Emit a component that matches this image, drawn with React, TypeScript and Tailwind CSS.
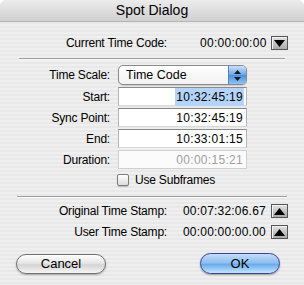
import React, { useState } from "react";

const font = "font-['Liberation_Sans',Arial,sans-serif]";

const StepButton: React.FC<{ up?: boolean }> = ({ up }) => (
    <div className="w-[17px] h-[14px] border border-[#555] bg-[linear-gradient(to_bottom,#e2e2e2,#a9a9a9)] flex items-center justify-center shadow-[inset_1px_1px_0_#f4f4f4]">
        <svg width="11" height="7" viewBox="0 0 11 7">
            {up ? <polygon points="0,7 11,7 5.5,0" fill="#000" /> : <polygon points="0,0 11,0 5.5,7" fill="#000" />}
        </svg>
    </div>
);

const Separator: React.FC<{ className: string }> = ({ className }) => (
    <div className={`h-[2px] border-t border-[#9d9d9d] bg-white/70 ${className}`} />
);

const Field: React.FC<{ value: string; selected?: boolean; disabled?: boolean; className?: string }> = ({ value, selected, disabled, className }) => (
    <div
        className={`w-[129px] h-[19px] flex items-center justify-end pr-[2px] text-[12px] tracking-[0.3px] border-t border-x border-b ${
            disabled ? "bg-[#fbfbfb] border-[#d0d0d0] text-[#a0a0a0]" : "bg-white border-t-[#8a8a8a] border-x-[#b4b4b4] border-b-[#d8d8d8] text-black"
        } ${className ?? ""}`}
    >
        <span className={selected ? "bg-[#b4d4fb] px-[1px]" : "px-[1px]"}>{value}</span>
    </div>
);

const FormRow: React.FC<{ label: string; children: React.ReactNode; className?: string }> = ({ label, children, className }) => (
    <div className={`flex items-center ${className ?? ""}`}>
        <div className="w-[110px] text-right text-[12px] tracking-[-0.2px]">{label}</div>
        <div className="ml-[8px]">{children}</div>
    </div>
);

const StampRow: React.FC<{ label: string; value: string; className?: string }> = ({ label, value, className }) => (
    <div className={`flex items-center h-[16px] ${className ?? ""}`}>
        <div className="w-[167px] text-right text-[12px] tracking-[-0.2px]">{label}</div>
        <div className="ml-[16px] w-[88px] text-[12px] tracking-[0.2px]">{value}</div>
        <StepButton up />
    </div>
);

const App: React.FC = () => {
    const [subframes, setSubframes] = useState(false);

    return (
        <div className={`w-[304px] h-[285px] bg-white ${font} text-black overflow-hidden`}>
            <div className="w-[304px] h-[285px] rounded-t-[6px] overflow-hidden bg-[repeating-linear-gradient(to_bottom,#efefef_0px,#efefef_2px,#e8e8e8_2px,#e8e8e8_4px)] flex flex-col">
                {/* title bar */}
                <div className="h-[22px] shrink-0 bg-[linear-gradient(to_bottom,#ececec,#d0d0d0)] border-b border-[#b5b5b5] flex items-center justify-center text-[14px]">
                    Spot Dialog
                </div>

                <div className="flex items-center h-[20px] mt-[11px]">
                    <div className="w-[167px] text-right text-[12px] tracking-[-0.2px]">Current Time Code:</div>
                    <div className="ml-[33px] w-[71px] text-[12px] tracking-[0.3px]">00:00:00:00</div>
                    <StepButton />
                </div>

                <Separator className="mx-[19px] mt-[5px]" />

                <FormRow label="Time Scale:" className="mt-[5px]">
                    <div className="w-[129px] h-[20px] rounded-[5px] border border-[#8a8a8a] bg-[linear-gradient(to_bottom,#ffffff,#f1f1f1)] flex items-stretch overflow-hidden shadow-[0_1px_1px_rgba(0,0,0,0.15)]">
                        <div className="flex-1 flex items-center pl-[7px] text-[12.5px]">Time Code</div>
                        <div className="w-[18px] border-l border-[#5d7ea8] bg-[linear-gradient(to_bottom,#c9e1fa,#6aa6e8_50%,#4a8ee0_51%,#8cc4f5)] flex items-center justify-center">
                            <svg width="7" height="11" viewBox="0 0 7 11">
                                <polygon points="0,4 7,4 3.5,0" fill="#1a1a1a" />
                                <polygon points="0,7 7,7 3.5,11" fill="#1a1a1a" />
                            </svg>
                        </div>
                    </div>
                </FormRow>

                <FormRow label="Start:" className="mt-[2px]">
                    <Field value="10:32:45:19" selected />
                </FormRow>
                <FormRow label="Sync Point:" className="mt-[2px]">
                    <Field value="10:32:45:19" />
                </FormRow>
                <FormRow label="End:" className="mt-[2px]">
                    <Field value="10:33:01:15" />
                </FormRow>
                <FormRow label="Duration:" className="mt-[2px]">
                    <Field value="00:00:15:21" disabled />
                </FormRow>

                <label className="flex items-center mt-[4px] ml-[117px] h-[14px] cursor-pointer">
                    <input type="checkbox" className="hidden" checked={subframes} onChange={() => setSubframes(!subframes)} />
                    <span className="w-[12px] h-[12px] rounded-[2px] border border-[#7c7c7c] bg-[linear-gradient(to_bottom,#ffffff,#dcdcdc)] shadow-[0_1px_1px_rgba(0,0,0,0.2)] flex items-center justify-center text-[10px] leading-none">
                        {subframes ? "✓" : ""}
                    </span>
                    <span className="ml-[6px] text-[12px] tracking-[-0.2px]">Use Subframes</span>
                </label>

                <Separator className="mx-[17px] mt-[9px]" />

                <StampRow label="Original Time Stamp:" value="00:07:32:06.67" className="mt-[5px]" />
                <StampRow label="User Time Stamp:" value="00:00:00:00.00" className="mt-[5px]" />

                <div className="flex items-center mt-[13px]">
                    <button className="ml-[16px] w-[90px] h-[20px] rounded-full border border-[#707070] bg-[linear-gradient(to_bottom,#ffffff,#e6e6e6_45%,#d4d4d4_55%,#f6f6f6)] shadow-[0_1px_2px_rgba(0,0,0,0.3)] text-[13px] flex items-center justify-center">
                        Cancel
                    </button>
                    <button className="ml-[94px] w-[80px] h-[21px] rounded-full border border-[#3a3f9c] bg-[linear-gradient(to_bottom,#c2ddf8,#8fc0f0_45%,#6aacec_55%,#c6e6fd)] shadow-[0_1px_2px_rgba(0,0,0,0.35)] text-[13px] flex items-center justify-center">
                        OK
                    </button>
                </div>
            </div>
        </div>
    );
};

export default App;
